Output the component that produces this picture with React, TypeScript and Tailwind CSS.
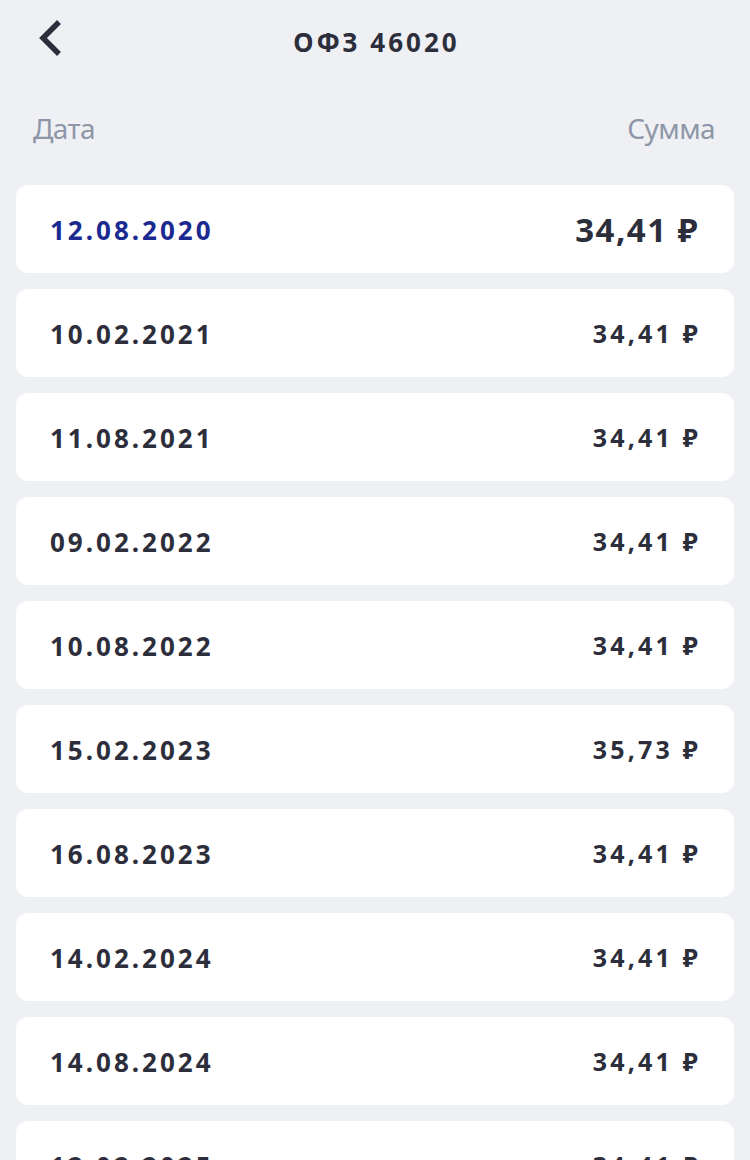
import React from "react";

const rows = [
  { d: "12.08.2020", a: "34,41 ₽", first: true },
  { d: "10.02.2021", a: "34,41 ₽" },
  { d: "11.08.2021", a: "34,41 ₽" },
  { d: "09.02.2022", a: "34,41 ₽" },
  { d: "10.08.2022", a: "34,41 ₽" },
  { d: "15.02.2023", a: "35,73 ₽" },
  { d: "16.08.2023", a: "34,41 ₽" },
  { d: "14.02.2024", a: "34,41 ₽" },
  { d: "14.08.2024", a: "34,41 ₽" },
  { d: "12.02.2025", a: "34,41 ₽" },
];

export default function App() {
  return (
    <div
      className="min-h-[1160px] w-[750px] bg-[#eff0f4] text-[#2c2e3b] overflow-hidden"
      style={{ fontFamily: '"Noto Sans", "Open Sans", sans-serif' }}
    >
      <div className="relative h-[84px] flex items-center justify-center">
        <div className="absolute left-[36px] top-[19px]">
          <svg width="30" height="38" viewBox="0 0 30 38" fill="none">
            <path d="M23 3 L7 19 L23 35" stroke="#2c2e3b" strokeWidth="5.5" strokeLinecap="butt" strokeLinejoin="miter" />
          </svg>
        </div>
        <div className="text-[26px] font-bold tracking-[3px] leading-none pl-[3px]">ОФЗ 46020</div>
      </div>
      <div className="flex justify-between px-[33px] pt-[26px] pb-[39px] text-[28px] leading-[36px] text-[#8e96a8] tracking-[-0.6px]">
        <span>Дата</span>
        <span className="mr-[2px]">Сумма</span>
      </div>
      <div className="flex flex-col gap-[16px] px-[16px]">
        {rows.map((r, i) => (
          <div
            key={i}
            className="h-[88px] shrink-0 bg-white rounded-[12px] flex items-center justify-between pl-[34px] pr-[33px] pt-[2px]"
          >
            {r.first ? (
              <>
                <span className="text-[26px] font-bold tracking-[3px] text-[#1a2a90]">{r.d}</span>
                <span className="text-[33px] font-bold tracking-[1.5px] mr-[2px]">{r.a}</span>
              </>
            ) : (
              <>
                <span className="text-[26px] font-bold tracking-[3px]">{r.d}</span>
                <span className="text-[25px] font-bold tracking-[3.2px]">{r.a}</span>
              </>
            )}
          </div>
        ))}
      </div>
    </div>
  );
}
